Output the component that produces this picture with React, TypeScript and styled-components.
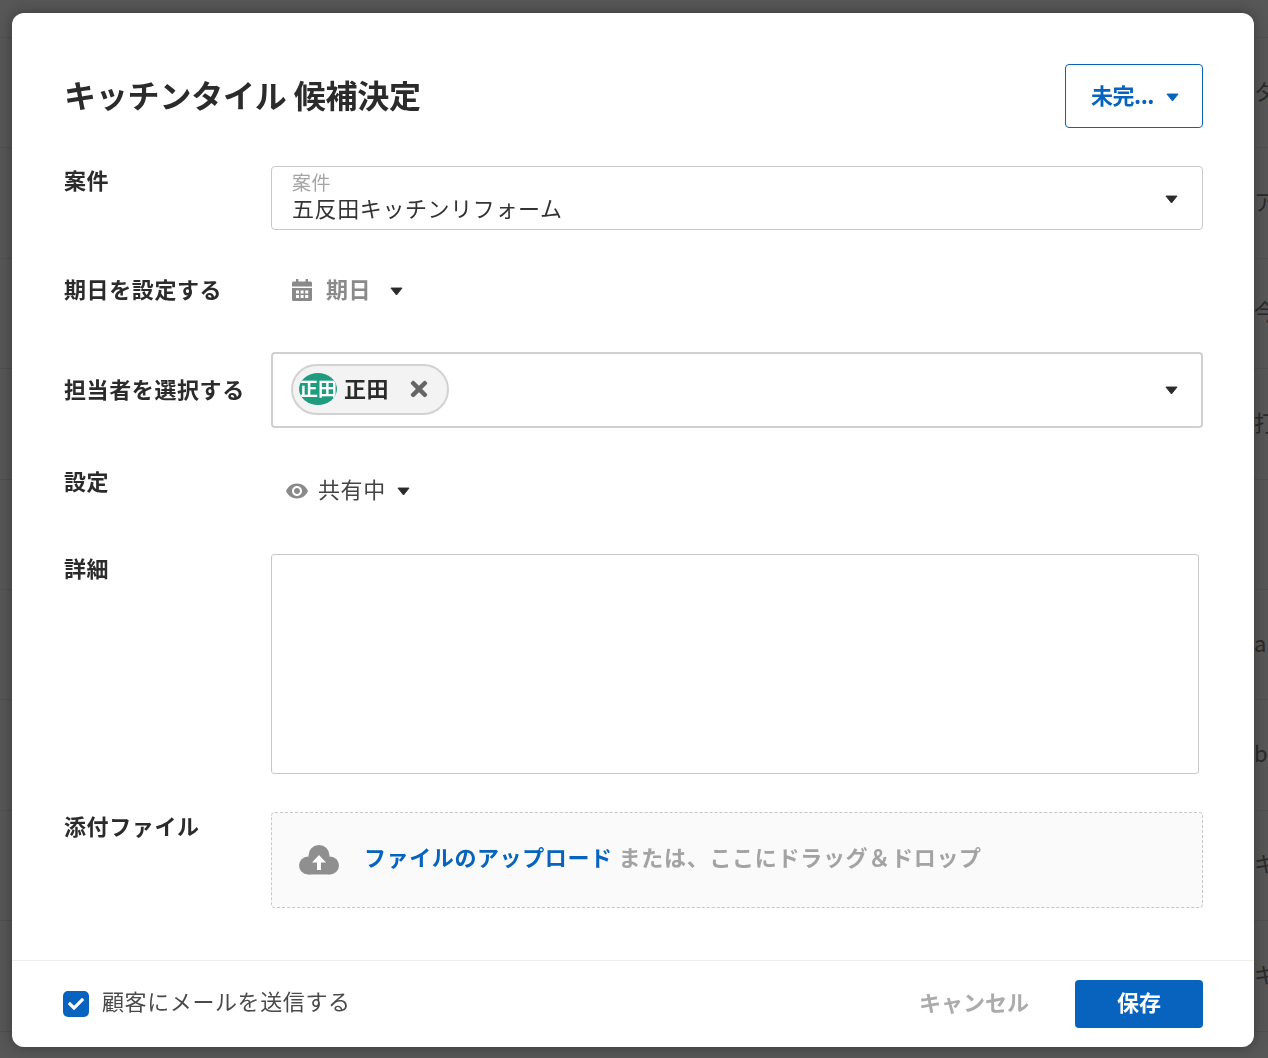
import styled, { createGlobalStyle } from "styled-components"
import { FaCheck, FaTimes } from "react-icons/fa"
import { MdVisibility } from "react-icons/md"

const GlobalStyle = createGlobalStyle`
  html, body {
    margin: 0;
    padding: 0;
    height: 100%;
    overflow: hidden;
    background: #575757;
    font-family: "Noto Sans CJK JP", "Noto Sans", sans-serif;
    font-size: 22px;
    letter-spacing: 0.6px;
    color: #2b2b2b;
  }
`

const Backdrop = styled.div`
  height: 1058px;
  overflow: hidden;
  background: #575757;
  padding-top: 37px;
  box-sizing: border-box;
`
const BackRow = styled.div`
  height: 110.4px;
  box-sizing: border-box;
  border-top: 1px solid #505050;
  padding: 0 0 6px 1254px;
  display: flex;
  align-items: center;
  color: #2a2a2a;
  font-size: 22px;
  white-space: nowrap;
  overflow: hidden;
`

const Modal = styled.div`
  position: fixed;
  left: 12px;
  top: 13px;
  width: 1242px;
  height: 1034px;
  background: #fff;
  border-radius: 12px;
  box-shadow: 0 0 14px rgba(0, 0, 0, 0.35);
  display: flex;
  flex-direction: column;
`
const Body = styled.div`
  flex: 1;
  padding: 51px 51px 0 52px;
`
const Header = styled.div`
  display: flex;
  align-items: center;
  justify-content: space-between;
  height: 64px;
`
const Title = styled.h1`
  margin: 0;
  padding-bottom: 4px;
  font-size: 32px;
  font-weight: 700;
  line-height: 60px;
  letter-spacing: -0.2px;
  color: #2b2b2b;
`
// Noto sits lower in its line box than the reference font, the padding lifts it
const TextLine = styled.span<{ $bold?: boolean; $lift?: number }>`
  display: block;
  padding-bottom: ${p => p.$lift ?? 4}px;
  line-height: 28px;
  font-weight: ${p => (p.$bold ? 700 : 400)};
`
const StatusButton = styled.button`
  width: 138px;
  height: 64px;
  box-sizing: border-box;
  border: 1px solid #0b63b4;
  border-radius: 4px;
  background: #fff;
  color: #0763bd;
  font: inherit;
  letter-spacing: -0.5px;
  display: flex;
  align-items: center;
  justify-content: center;
  gap: 12px;
  padding: 0 0 0 2px;
`
const Row = styled.div<{ $top: number; $height: number; $center?: boolean }>`
  display: flex;
  margin-top: ${p => p.$top}px;
  height: ${p => p.$height}px;
  align-items: ${p => (p.$center ? "center" : "flex-start")};
`
const Label = styled.div`
  width: 207px;
  flex: none;
  font-weight: 700;
  line-height: 26px;
  padding-bottom: 4px;
  color: #2b2b2b;
`
const SelectBox = styled.div<{ $strong?: boolean }>`
  flex: 1;
  height: 100%;
  box-sizing: border-box;
  border: ${p => (p.$strong ? "2px solid #d0d0d0" : "1px solid #c9c9c9")};
  border-radius: 4px;
  display: flex;
  align-items: center;
  justify-content: space-between;
  padding: 0 ${p => (p.$strong ? "23px 2px 18px" : "24px 0 20px")};
`
const FieldText = styled.div`
  display: flex;
  flex-direction: column;
  padding-bottom: 4px;
`
const Placeholder = styled.span`
  font-size: 19px;
  line-height: 22px;
  color: #a5a5a5;
`
const Value = styled.span`
  line-height: 28px;
  color: #333;
`
const DateControl = styled.div`
  display: flex;
  align-items: center;
  padding-left: 21px;
  color: #8a8a8a;
  gap: 14px;
`
const DateCaret = styled.span`
  display: flex;
  margin-left: 5px;
`
const Chip = styled.div`
  display: flex;
  align-items: center;
  width: 158px;
  height: 51px;
  box-sizing: border-box;
  border: 2px solid #d2d2d2;
  border-radius: 26px;
  background: #f3f3f3;
  padding-left: 6px;
  svg {
    font-size: 24px;
    color: #666;
    margin-left: 18px;
  }
`
const Avatar = styled.span`
  width: 38px;
  height: 32px;
  border-radius: 50%;
  background: #1f9c80;
  color: #fff;
  font-size: 19px;
  font-weight: 700;
  letter-spacing: 0;
  line-height: 30px;
  text-align: center;
  overflow: hidden;
  white-space: nowrap;
  margin-right: 7px;
  flex: none;
`
const ShareControl = styled.div`
  display: flex;
  align-items: center;
  padding-left: 14px;
  color: #444;
  svg.eye {
    font-size: 24px;
    color: #8a8a8a;
    margin-right: 9px;
    margin-top: 2px;
  }
`
const ShareCaret = styled.span`
  display: flex;
  margin-left: 11px;
`
const ShareRowAlign = styled.div`
  align-self: flex-end;
  height: 46px;
  display: flex;
  align-items: center;
`
const Details = styled.div`
  width: 928px;
  height: 100%;
  box-sizing: border-box;
  border: 1px solid #c9c9c9;
  border-radius: 3px;
`
const Upload = styled.div`
  flex: 1;
  height: 100%;
  box-sizing: border-box;
  border: 1px dashed #c6c6c6;
  border-radius: 4px;
  background: #fafafa;
  display: flex;
  align-items: center;
  padding: 0 0 4px 27px;
`
const CloudIcon = styled.svg`
  width: 40px;
  height: 30px;
  margin: 4px 25px 0 0;
  flex: none;
`
const UploadLink = styled(TextLine)`
  color: #0763bd;
  margin-right: 6px;
`
const UploadHint = styled(TextLine)`
  color: #a3a3a3;
  letter-spacing: 0.7px;
`
const Footer = styled.div`
  height: 87px;
  flex: none;
  box-sizing: border-box;
  border-top: 1px solid #eee;
  display: flex;
  align-items: center;
  justify-content: space-between;
  padding: 0 51px;
`
const CheckArea = styled.div`
  display: flex;
  align-items: center;
  gap: 13px;
  color: #4a4a4a;
`
const CheckBox = styled.span`
  width: 26px;
  height: 26px;
  border-radius: 5px;
  background: #0763bd;
  color: #fff;
  display: flex;
  align-items: center;
  justify-content: center;
  font-size: 16px;
`
const Actions = styled.div`
  display: flex;
  align-items: center;
  gap: 46px;
`
const Cancel = styled.button`
  border: none;
  background: none;
  padding: 0;
  font: inherit;
  color: #ababab;
`
const Save = styled.button`
  width: 128px;
  height: 48px;
  border: none;
  border-radius: 4px;
  background: #0763bd;
  color: #fff;
  font: inherit;
  padding: 0;
`
const CaretIcon = styled.svg`
  margin-top: 2px;
  flex: none;
`

function Caret({ color = "#2b2b2b" }: { color?: string }) {
  return (
    <CaretIcon width={13} height={9} viewBox="0 0 14 9.5">
      <path d="M1 1h12L7 8.5z" fill={color} stroke={color} strokeWidth="1" strokeLinejoin="round" />
    </CaretIcon>
  )
}

function CalendarIcon() {
  return (
    <svg width="20" height="22" viewBox="0 0 20 22" fill="#8a8a8a">
      <rect x="4" y="0" width="2.4" height="4" />
      <rect x="13.6" y="0" width="2.4" height="4" />
      <path d="M1.5 2.5h17A1.5 1.5 0 0 1 20 4v3.5H0V4a1.5 1.5 0 0 1 1.5-1.5z" />
      <path d="M0 9h20v11.5a1.5 1.5 0 0 1-1.5 1.5h-17A1.5 1.5 0 0 1 0 20.5z" />
      {[4, 8.6, 13.2].map(x =>
        [11.5, 16].map(y => <rect key={`${x}-${y}`} x={x} y={y} width="3" height="3" fill="#fff" />)
      )}
    </svg>
  )
}

const backRows = ["タスク", "アポ", "今日", "打合せ", "", "abc", "bcd", "キッチン", "キッチン", ""]

export default function App() {
  return (
    <>
      <GlobalStyle />
      <Backdrop>
        {backRows.map((text, i) => (
          <BackRow key={i}>{text}</BackRow>
        ))}
      </Backdrop>
      <Modal>
        <Body>
          <Header>
            <Title>キッチンタイル 候補決定</Title>
            <StatusButton>
              <TextLine $bold>未完...</TextLine>
              <Caret color="#0763bd" />
            </StatusButton>
          </Header>
          <Row $top={38} $height={64}>
            <Label>案件</Label>
            <SelectBox>
              <FieldText>
                <Placeholder>案件</Placeholder>
                <Value>五反田キッチンリフォーム</Value>
              </FieldText>
              <Caret />
            </SelectBox>
          </Row>
          <Row $top={28} $height={64} $center>
            <Label>期日を設定する</Label>
            <DateControl>
              <CalendarIcon />
              <TextLine $bold>期日</TextLine>
              <DateCaret>
                <Caret />
              </DateCaret>
            </DateControl>
          </Row>
          <Row $top={30} $height={76} $center>
            <Label>担当者を選択する</Label>
            <SelectBox $strong>
              <Chip>
                <Avatar>正田</Avatar>
                <TextLine $bold>正田</TextLine>
                <FaTimes />
              </Chip>
              <Caret />
            </SelectBox>
          </Row>
          <Row $top={39} $height={46}>
            <Label>設定</Label>
            <ShareRowAlign>
              <ShareControl>
                <MdVisibility className="eye" />
                <TextLine>共有中</TextLine>
                <ShareCaret>
                  <Caret />
                </ShareCaret>
              </ShareControl>
            </ShareRowAlign>
          </Row>
          <Row $top={41} $height={220}>
            <Label>詳細</Label>
            <Details />
          </Row>
          <Row $top={38} $height={96}>
            <Label>添付ファイル</Label>
            <Upload>
              <CloudIcon viewBox="0 0 40 30">
                <g fill="#8f8f8f">
                  <circle cx="20" cy="10.5" r="10.5" />
                  <circle cx="9" cy="20.5" r="9" />
                  <circle cx="31" cy="20.5" r="9" />
                  <rect x="9" y="14" width="22" height="15.5" />
                </g>
                <path d="M20 10l7 7.5h-5V25h-4v-7.5h-5z" fill="#fff" />
              </CloudIcon>
              <UploadLink $bold>ファイルのアップロード</UploadLink>
              <UploadHint $bold>または、ここにドラッグ＆ドロップ</UploadHint>
            </Upload>
          </Row>
        </Body>
        <Footer>
          <CheckArea>
            <CheckBox>
              <FaCheck />
            </CheckBox>
            <TextLine $lift={8}>顧客にメールを送信する</TextLine>
          </CheckArea>
          <Actions>
            <Cancel>
              <TextLine $bold $lift={6}>キャンセル</TextLine>
            </Cancel>
            <Save>
              <TextLine $bold $lift={6}>保存</TextLine>
            </Save>
          </Actions>
        </Footer>
      </Modal>
    </>
  )
}
